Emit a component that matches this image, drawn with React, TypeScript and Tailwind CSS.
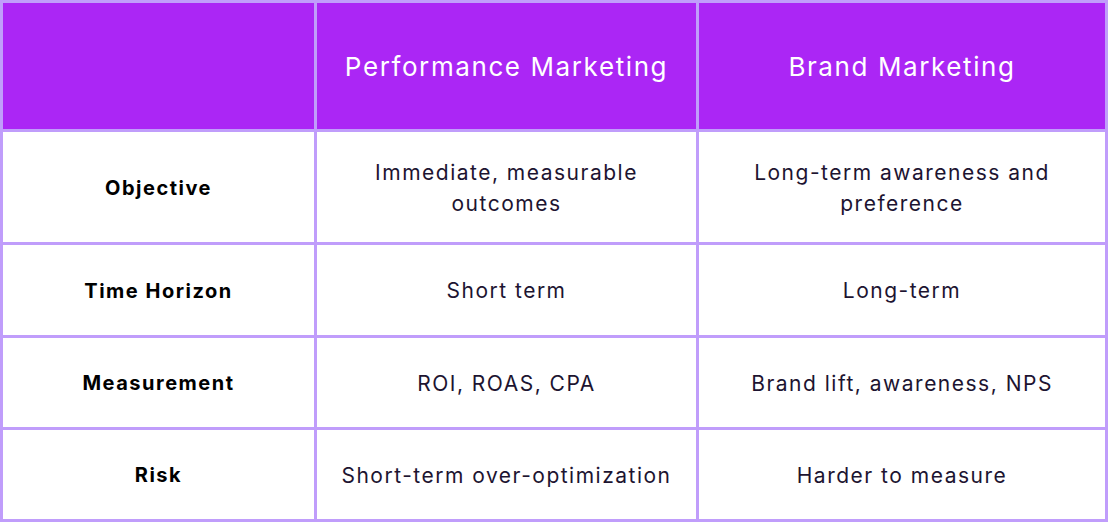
import React from "react";

const rows = [
  { label: "Objective", perf: "Immediate, measurable outcomes", brand: "Long-term awareness and preference" },
  { label: "Time Horizon", perf: "Short term", brand: "Long-term" },
  { label: "Measurement", perf: "ROI, ROAS, CPA", brand: "Brand lift, awareness, NPS" },
  { label: "Risk", perf: "Short-term over-optimization", brand: "Harder to measure" },
];

export default function App() {
  return (
    <div className="w-[1108px] h-[524px] bg-white" style={{ fontFamily: "Inter, 'Open Sans', sans-serif" }}>
      <div className="grid grid-cols-[311px_379px_406px] grid-rows-[126px_110px_90px_89px_89px] gap-[3px] p-[3px] bg-[#c09dfb] w-[1108px]">
        <div className="bg-[#ab26f5]" />
        <div className="bg-[#ab26f5] flex items-center justify-center pt-[1px] text-white text-[26px] tracking-[1.6px]">
          Performance Marketing
        </div>
        <div className="bg-[#ab26f5] flex items-center justify-center pt-[1px] text-white text-[26px] tracking-[1.6px]">
          Brand Marketing
        </div>
        {rows.map((r) => (
          <React.Fragment key={r.label}>
            <div className="bg-white flex items-center justify-center pt-[1px] text-black font-bold text-[20px] tracking-[1.5px]">
              {r.label}
            </div>
            <div className="bg-white flex items-center justify-center pt-[1px] text-center text-[#1d1431] text-[21px] leading-[31px] tracking-[1.5px] px-[20px]">
              {r.perf}
            </div>
            <div className="bg-white flex items-center justify-center pt-[1px] text-center text-[#1d1431] text-[21px] leading-[31px] tracking-[1.5px] px-[20px]">
              {r.brand}
            </div>
          </React.Fragment>
        ))}
      </div>
    </div>
  );
}
